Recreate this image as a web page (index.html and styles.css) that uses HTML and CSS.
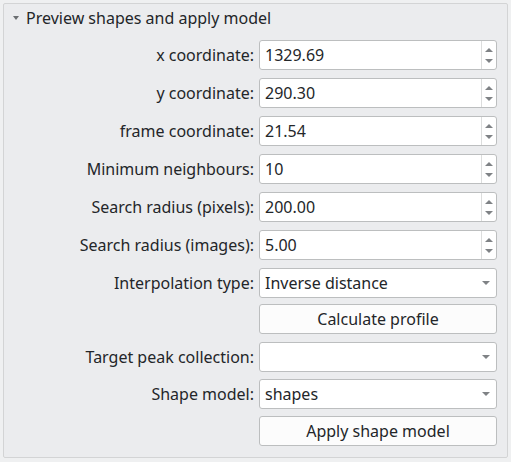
FILE: index.html
```html
<!DOCTYPE html>
<html>
<head>
<meta charset="utf-8">
<link rel="stylesheet" href="styles.css">
</head>
<body>
<div class="panel">
  <div class="title"><span class="caret"></span><span>Preview shapes and apply model</span></div>
  <div class="form">
    <div class="row"><label>x coordinate:</label>
      <div class="field spin"><span class="val">1329.69</span><span class="spinbtn"><i class="up"></i><i class="down"></i></span></div></div>
    <div class="row"><label>y coordinate:</label>
      <div class="field spin"><span class="val">290.30</span><span class="spinbtn"><i class="up"></i><i class="down"></i></span></div></div>
    <div class="row"><label>frame coordinate:</label>
      <div class="field spin"><span class="val">21.54</span><span class="spinbtn"><i class="up"></i><i class="down"></i></span></div></div>
    <div class="row"><label>Minimum neighbours:</label>
      <div class="field spin"><span class="val">10</span><span class="spinbtn"><i class="up"></i><i class="down"></i></span></div></div>
    <div class="row"><label>Search radius (pixels):</label>
      <div class="field spin"><span class="val">200.00</span><span class="spinbtn"><i class="up"></i><i class="down"></i></span></div></div>
    <div class="row"><label>Search radius (images):</label>
      <div class="field spin"><span class="val">5.00</span><span class="spinbtn"><i class="up"></i><i class="down"></i></span></div></div>
    <div class="row"><label>Interpolation type:</label>
      <div class="field combo"><span class="val">Inverse distance</span><span class="arrow"></span></div></div>
    <div class="row gap6"><label></label>
      <div class="button">Calculate profile</div></div>
    <div class="row"><label>Target peak collection:</label>
      <div class="field combo"><span class="val"></span><span class="arrow"></span></div></div>
    <div class="row gap7"><label>Shape model:</label>
      <div class="field combo"><span class="val">shapes</span><span class="arrow"></span></div></div>
    <div class="row gap7"><label></label>
      <div class="button">Apply shape model</div></div>
  </div>
</div>
</body>
</html>
```

FILE: styles.css
```css
html, body {
  margin: 0;
  padding: 0;
  background: #eff0f1;
  font-family: "Noto Sans", "Open Sans", sans-serif;
  font-size: 16px;
  color: #232629;
}

.panel {
  margin: 3px 0 0 3px;
  width: 503px;
  height: 453px;
  border: 1px solid #d3d4d5;
  border-radius: 2px;
  background: #ebecee;
  box-sizing: content-box;
}

.title {
  display: flex;
  align-items: center;
  height: 20px;
  line-height: 20px;
  margin-top: 4px;
  padding-left: 9px;
}

.caret {
  width: 0;
  height: 0;
  border-left: 3.5px solid transparent;
  border-right: 3.5px solid transparent;
  border-top: 4px solid #6b6e71;
  margin-right: 7px;
  margin-top: -1px;
}

.form {
  margin-top: 12px;
  display: flex;
  flex-direction: column;
}

.row {
  display: flex;
  height: 30px;
  margin-top: 8px;
  column-gap: 5px;
}

.row:first-child {
  margin-top: 0;
}

.row.gap6 {
  margin-top: 6px;
}

.row.gap7 {
  margin-top: 7px;
}

label {
  width: 250px;
  display: flex;
  align-items: center;
  justify-content: flex-end;
  white-space: nowrap;
}

.field {
  width: 238px;
  display: flex;
  align-items: stretch;
  background: #ffffff;
  border: 1px solid #bcbebf;
  border-radius: 3px;
  box-sizing: border-box;
}

.val {
  flex: 1;
  display: flex;
  align-items: center;
  padding-left: 5px;
}

.spinbtn {
  width: 14px;
  border-left: 1px solid #dcdddd;
  display: flex;
  flex-direction: column;
  align-items: center;
  justify-content: center;
  gap: 7px;
}

.spinbtn i {
  width: 0;
  height: 0;
  border-left: 4px solid transparent;
  border-right: 4px solid transparent;
}

.spinbtn .up {
  border-bottom: 4px solid #7f8285;
}

.spinbtn .down {
  border-top: 4px solid #7f8285;
}

.combo .arrow {
  width: 0;
  height: 0;
  align-self: center;
  border-left: 4px solid transparent;
  border-right: 4px solid transparent;
  border-top: 4px solid #7f8285;
  margin-right: 6px;
}

.button {
  width: 238px;
  display: flex;
  align-items: center;
  justify-content: center;
  background: #fcfcfc;
  border: 1px solid #bcbebf;
  border-radius: 3px;
  box-sizing: border-box;
}
```
